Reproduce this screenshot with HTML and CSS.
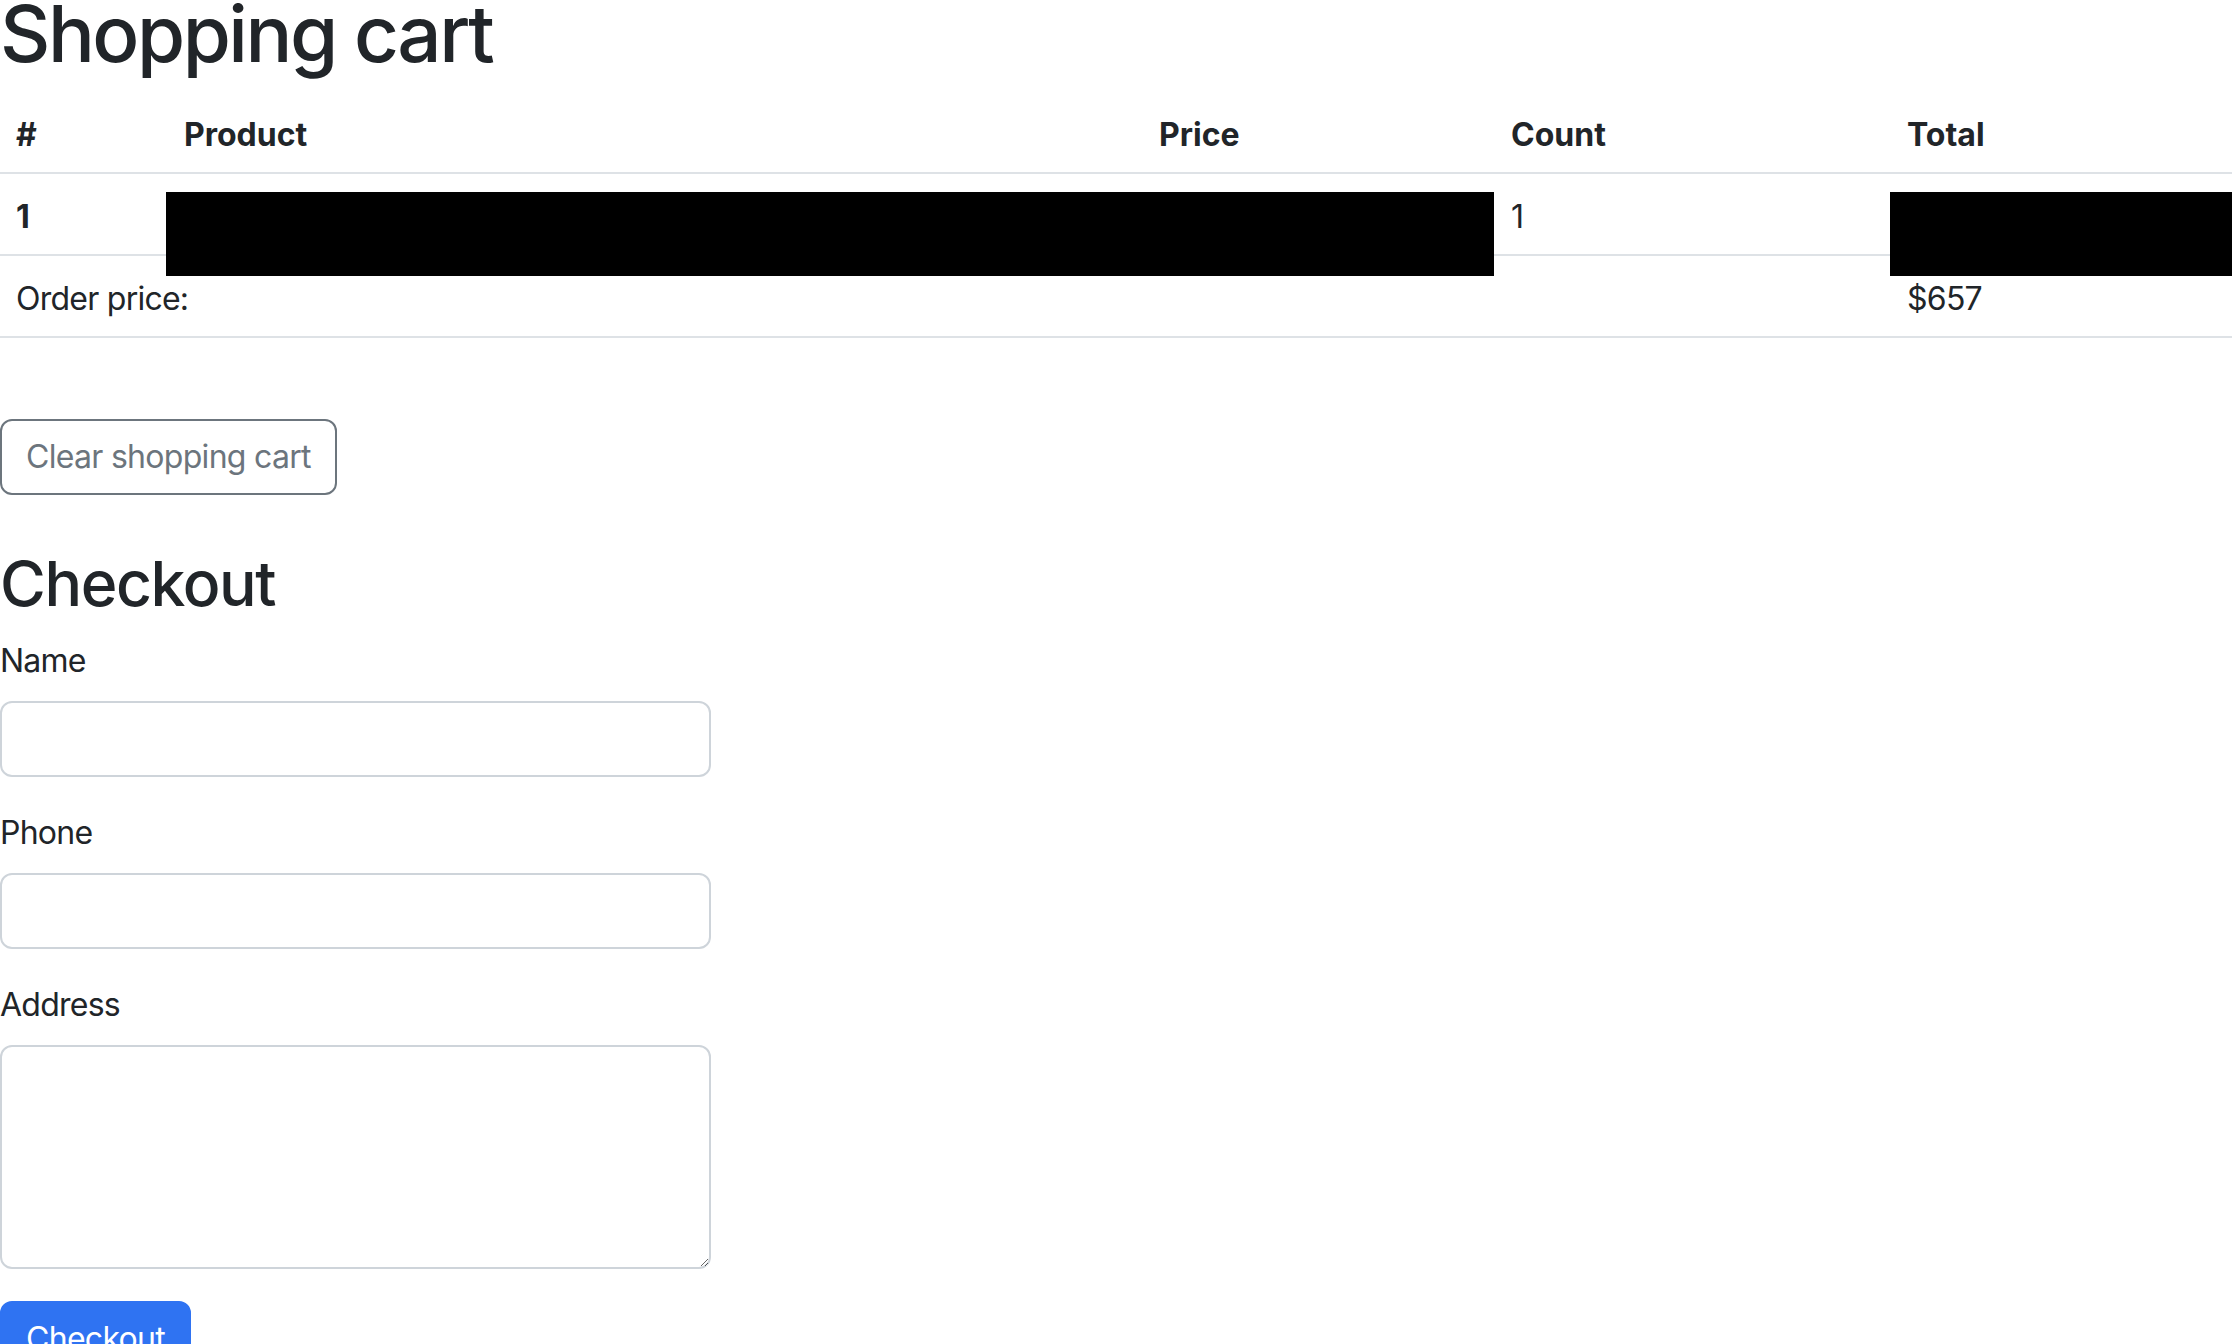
FILE: index.html
```html
<!DOCTYPE html>
<html lang="en">
<head>
<meta charset="utf-8">
<title>Shopping cart</title>
<link rel="stylesheet" href="styles.css">
</head>
<body>
<main class="page">
  <h1 class="page-title">Shopping cart</h1>
  <div class="cart">
    <table class="cart-table">
      <colgroup>
        <col class="col-num">
        <col class="col-product">
        <col class="col-price">
        <col class="col-count">
        <col class="col-total">
      </colgroup>
      <thead>
        <tr>
          <th>#</th>
          <th>Product</th>
          <th>Price</th>
          <th>Count</th>
          <th>Total</th>
        </tr>
      </thead>
      <tbody>
        <tr>
          <th>1</th>
          <td></td>
          <td></td>
          <td>1</td>
          <td></td>
        </tr>
        <tr>
          <td colspan="4">Order price:</td>
          <td>$657</td>
        </tr>
      </tbody>
    </table>
    <div class="redact redact-product"></div>
    <div class="redact redact-total"></div>
  </div>

  <button class="btn btn-outline" type="button">Clear shopping cart</button>

  <h2 class="section-title">Checkout</h2>
  <form class="checkout-form">
    <div class="field">
      <label class="field-label" for="name">Name</label>
      <input class="field-control" id="name" type="text">
    </div>
    <div class="field">
      <label class="field-label" for="phone">Phone</label>
      <input class="field-control" id="phone" type="text">
    </div>
    <div class="field">
      <label class="field-label" for="address">Address</label>
      <textarea class="field-control field-area" id="address"></textarea>
    </div>
    <button class="btn btn-primary" type="button">Checkout</button>
  </form>
</main>
</body>
</html>
```

FILE: styles.css
```css
html, body {
  margin: 0;
  padding: 0;
  background: #ffffff;
}

body {
  font-family: Inter, "Liberation Sans", Arial, sans-serif;
  font-size: 32px;
  line-height: 48px;
  letter-spacing: -0.75px;
  color: #212529;
  overflow: hidden;
}

.page {
  display: flex;
  flex-direction: column;
  align-items: flex-start;
}

.page-title {
  font-size: 78px;
  font-weight: 500;
  line-height: 90px;
  letter-spacing: -2.5px;
  margin: -11px 0 13px;
}

.cart {
  position: relative;
  width: 100%;
  margin-bottom: 81px;
}

.cart-table {
  width: 100%;
  border-collapse: collapse;
  table-layout: fixed;
}

.col-num { width: 168px; }
.col-product { width: 975px; }
.col-price { width: 352px; }
.col-count { width: 396px; }
.col-total { width: 341px; }

.cart-table th,
.cart-table td {
  padding: 19px 16px 13px;
  text-align: left;
  vertical-align: top;
  border-bottom: 2px solid #dee2e6;
  height: 48px;
}

.cart-table th {
  font-weight: 700;
  letter-spacing: 0;
}

.cart-table td {
  font-weight: 400;
}

.redact {
  position: absolute;
  top: 100px;
  height: 84px;
  background: #000000;
}

.redact-product {
  left: 166px;
  width: 1328px;
}

.redact-total {
  left: 1890px;
  right: 0;
}

.btn {
  font-family: inherit;
  font-size: 32px;
  line-height: 48px;
  letter-spacing: -0.7px;
  padding: 12px 24px;
  border-radius: 12px;
  border: 2px solid transparent;
  background: transparent;
  cursor: pointer;
}

.btn-outline {
  color: #6c757d;
  border-color: #6c757d;
  margin-bottom: 51px;
}

.btn-primary {
  color: #ffffff;
  background: #2f73f2;
  border-color: #2f73f2;
}

.section-title {
  font-size: 62.5px;
  font-weight: 500;
  line-height: 75px;
  letter-spacing: -1.4px;
  margin: 0 0 16px;
}

.checkout-form {
  width: 711px;
  display: flex;
  flex-direction: column;
  align-items: flex-start;
}

.field {
  width: 100%;
  display: flex;
  flex-direction: column;
  margin-bottom: 32px;
}

.field-label {
  margin-bottom: 16px;
}

.field-control {
  box-sizing: border-box;
  width: 100%;
  height: 76px;
  padding: 12px 24px;
  font-family: inherit;
  font-size: 32px;
  line-height: 48px;
  color: #212529;
  background: #ffffff;
  border: 2px solid #ced4da;
  border-radius: 12px;
  outline: none;
}

.field-area {
  height: 224px;
  resize: vertical;
}
```
